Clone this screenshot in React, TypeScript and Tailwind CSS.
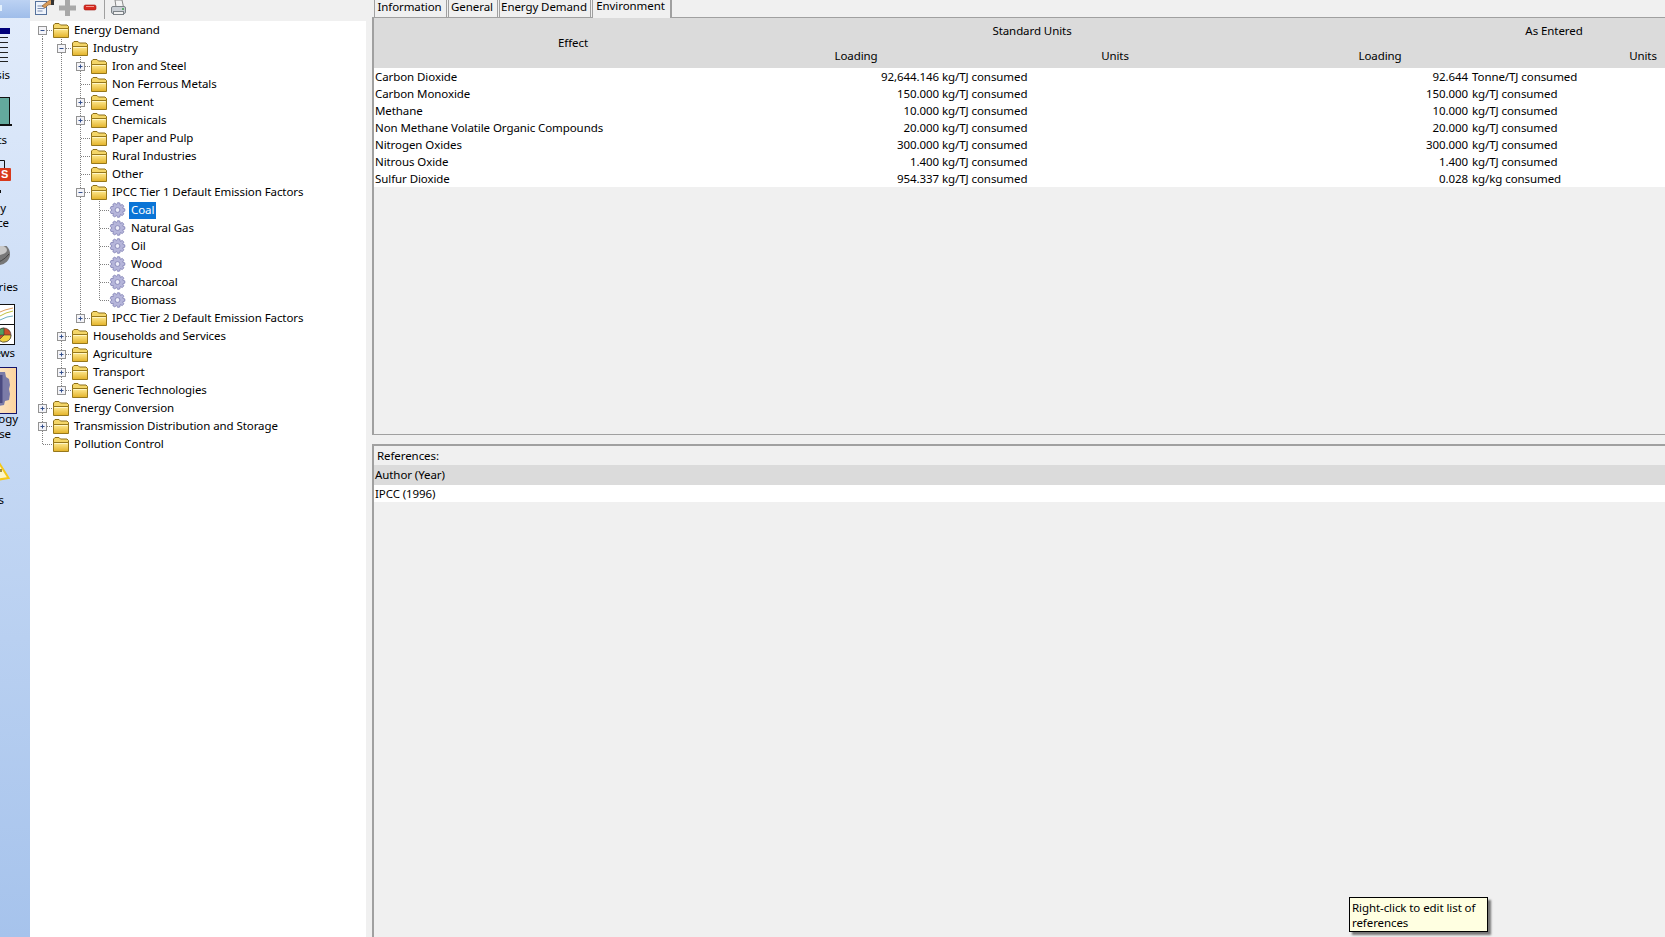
import React from "react";

const FONT = "font-['Noto_Sans','Liberation_Sans',sans-serif]";

type Node = { label: string; kids?: Node[]; open?: boolean; leaf?: boolean; selected?: boolean };

const tree: Node[] = [
  {
    label: "Energy Demand",
    open: true,
    kids: [
      {
        label: "Industry",
        open: true,
        kids: [
          { label: "Iron and Steel", kids: [] },
          { label: "Non Ferrous Metals" },
          { label: "Cement", kids: [] },
          { label: "Chemicals", kids: [] },
          { label: "Paper and Pulp" },
          { label: "Rural Industries" },
          { label: "Other" },
          {
            label: "IPCC Tier 1 Default Emission Factors",
            open: true,
            kids: [
              { label: "Coal", leaf: true, selected: true },
              { label: "Natural Gas", leaf: true },
              { label: "Oil", leaf: true },
              { label: "Wood", leaf: true },
              { label: "Charcoal", leaf: true },
              { label: "Biomass", leaf: true },
            ],
          },
          { label: "IPCC Tier 2 Default Emission Factors", kids: [] },
        ],
      },
      { label: "Households and Services", kids: [] },
      { label: "Agriculture", kids: [] },
      { label: "Transport", kids: [] },
      { label: "Generic Technologies", kids: [] },
    ],
  },
  { label: "Energy Conversion", kids: [] },
  { label: "Transmission Distribution and Storage", kids: [] },
  { label: "Pollution Control" },
];

function Folder() {
  return (
    <svg width="19" height="18" viewBox="0 0 19 18" className="shrink-0">
      <defs>
        <linearGradient id="fd" x1="0" x2="0" y1="0" y2="1">
          <stop offset="0" stopColor="#ffeb94" />
          <stop offset="1" stopColor="#e3b228" />
        </linearGradient>
      </defs>
      <path d="M1.500 15.500V4L3 2.500h4L8.500 4H15l1.500 1.500v10z" fill="#f4d668" stroke="#8c6e18" />
      <path d="M1.500 16.500V7.500h15v9z" fill="url(#fd)" stroke="#97781c" />
      <path d="M2.500 8.500h13" stroke="#fff6c4" />
    </svg>
  );
}

function gearPath(cx: number, cy: number, ro: number, ri: number, n: number) {
  let d = "";
  for (let i = 0; i < n; i++) {
    const a = (i / n) * Math.PI * 2;
    const s = (Math.PI * 2) / n;
    const pts: [number, number][] = [
      [ri, a - s * 0.5],
      [ro, a - s * 0.22],
      [ro, a + s * 0.22],
    ];
    for (const [r, t] of pts) {
      d += `${d ? "L" : "M"}${(cx + r * Math.cos(t)).toFixed(2)} ${(cy + r * Math.sin(t)).toFixed(2)}`;
    }
  }
  return d + "z";
}

function Gear() {
  return (
    <svg width="19" height="18" viewBox="0 0 19 18" className="shrink-0">
      <path d={gearPath(8.5, 9, 7.4, 5.4, 9)} fill="#b5b5da" stroke="#8080b4" strokeWidth="0.8" />
      <circle cx="8.500" cy="9" r="2.400" fill="#ececf8" stroke="#7c7cb0" strokeWidth="0.8" />
    </svg>
  );
}

function Guide({ through }: { through: boolean }) {
  return (
    <svg width="19" height="18" className="shrink-0">
      {through && <path d="M9.500 0V18" stroke="#808080" strokeDasharray="1 1" />}
    </svg>
  );
}

function Branch({ node, first, last, top }: { node: Node; first: boolean; last: boolean; top: boolean }) {
  const hasBox = !!node.kids;
  return (
    <svg width="19" height="18" className="shrink-0">
      <path d={`M9.500 ${top && first ? 9 : 0}V${last ? 9 : 18}`} stroke="#808080" strokeDasharray="1 1" />
      <path d="M10 9.500H19" stroke="#808080" strokeDasharray="1 1" />
      {hasBox && (
        <g>
          <rect x="5.500" y="5.500" width="8" height="8" fill="#f4f4f8" stroke="#939393" />
          <path d="M7.500 9.500h4" stroke="#34508c" />
          {!node.open && <path d="M9.500 7.500v4" stroke="#34508c" />}
        </g>
      )}
    </svg>
  );
}

function Tree({ nodes, guides }: { nodes: Node[]; guides: boolean[] }) {
  return (
    <>
      {nodes.map((n, i) => {
        const last = i === nodes.length - 1;
        return (
          <React.Fragment key={n.label}>
            <div className="flex h-[18px] items-center">
              {guides.map((g, k) => (
                <Guide key={k} through={g} />
              ))}
              <Branch node={n} first={i === 0} last={last} top={guides.length === 0} />
              {n.leaf ? <Gear /> : <Folder />}
              <span
                className={
                  n.selected
                    ? "ml-[1px] flex h-[17px] items-center bg-[#0a74d6] px-[2px] pb-[1px] whitespace-nowrap text-white"
                    : "ml-[1px] flex h-[17px] items-center px-[2px] pb-[2px] whitespace-nowrap text-black"
                }
              >
                {n.label}
              </span>
            </div>
            {n.open && n.kids && <Tree nodes={n.kids} guides={[...guides, !last]} />}
          </React.Fragment>
        );
      })}
    </>
  );
}

function Toolbar() {
  return (
    <div className="flex h-[21px] items-start bg-[#f0f0f0] pl-[3px]">
      <svg width="24" height="17" viewBox="0 0 24 17" className="shrink-0">
        <rect x="2.500" y="1.500" width="11" height="13" fill="#eef3fb" stroke="#56729c" />
        <path d="M4.500 6h7M4.500 8.500h7M4.500 11h5" stroke="#7b8db0" />
        <path d="M9 6l5-4 3 -2h4l-1 4-5 1-3 3z" fill="#d89a58" stroke="#7a5028" strokeWidth="0.6" />
        <rect x="18" y="0" width="3" height="5" fill="#333" />
      </svg>
      <svg width="22" height="17" viewBox="0 0 22 17" className="shrink-0">
        <path d="M8 0h5v5.500h6v5h-6V16H8v-5.500H2v-5h6z" fill="#a8a8a8" />
      </svg>
      <svg width="23" height="17" viewBox="0 0 23 17" className="shrink-0">
        <rect x="5" y="5" width="12" height="5" rx="1.500" fill="#d92a20" stroke="#9a1710" strokeWidth="0.6" />
        <path d="M7 6.500h8" stroke="#f59a90" />
      </svg>
      <div className="mr-[5px] ml-[2px] h-[19px] w-[1px] bg-[#a0a0a0]" />
      <svg width="18" height="17" viewBox="0 0 18 17" className="shrink-0">
        <path d="M5 0h7l1.500 7H6z" fill="#f4f4f4" stroke="#8a8a8a" />
        <rect x="1.500" y="6.500" width="14" height="7" rx="1.500" fill="#c9ced4" stroke="#7c8287" />
        <rect x="3.500" y="11.500" width="10" height="3" fill="#f0f0f0" stroke="#7c8287" />
        <circle cx="13" cy="9" r="1" fill="#3aa04a" />
      </svg>
    </div>
  );
}

function SideLabel({ text, className }: { text: string; className: string }) {
  return (
    <div className={`flex h-[15px] items-center justify-end whitespace-nowrap text-black ${className}`}>
      <span className="shrink-0">{text}</span>
    </div>
  );
}

function Sidebar() {
  return (
    <div className="flex h-full w-[30px] shrink-0 flex-col overflow-hidden bg-gradient-to-b from-[#e2ecfb] to-[#a6c3ec]">
      <div className="h-[18px] shrink-0 bg-gradient-to-b from-[#bcd2f3] to-[#9fbdea]">
        <div className="mt-[5px] ml-0 h-[6px] w-[2px] bg-[#e4f1fd]" />
      </div>
      {/* Analysis */}
      <svg width="30" height="35" viewBox="0 0 30 35" className="mt-[10px] shrink-0">
        <rect x="0" y="0" width="10" height="6" fill="#00007a" />
        <path d="M0 9.500h8M0 14.500h8M0 19.500h8M0 24.500h8M0 29.500h8M0 33.500h8" stroke="#222" />
      </svg>
      <SideLabel text="Analysis" className="mt-[4px] w-[10px]" />
      {/* Results */}
      <svg width="30" height="30" viewBox="0 0 30 30" className="mt-[15px] shrink-0">
        <rect x="-2" y="0.500" width="11.500" height="27" fill="#63a99d" stroke="#111" />
        <path d="M0 28h12" stroke="#111" strokeWidth="2" />
      </svg>
      <SideLabel text="Results" className="mt-[5px] w-[7px]" />
      {/* Energy Balance */}
      <svg width="30" height="36" viewBox="0 0 30 36" className="mt-[13px] shrink-0">
        <path d="M0 .5h4.500V8" fill="none" stroke="#111" />
        <rect x="-1" y="8" width="12" height="13" rx="1" fill="#d8391c" />
        <text x="1" y="18" fontSize="11" fontWeight="700" fill="#fff" fontFamily="Liberation Sans">S</text>
        <path d="M0 31.500h1" stroke="#111" strokeWidth="3" />
      </svg>
      <SideLabel text="Energy" className="mt-[4px] w-[6px]" />
      <SideLabel text="Balance" className="w-[9px]" />
      {/* Summaries */}
      <svg width="30" height="22" viewBox="0 0 30 22" className="mt-[16px] shrink-0">
        <ellipse cx="-1" cy="8" rx="11" ry="11" fill="#777" />
        <ellipse cx="-2" cy="4" rx="9" ry="5" fill="#c8c8c8" />
        <path d="M-8 17q10 0 17-9" stroke="#444" fill="none" />
      </svg>
      <SideLabel text="Summaries" className="mt-[11px] w-[18px]" />
      {/* Overviews */}
      <svg width="30" height="42" viewBox="0 0 30 42" className="mt-[10px] shrink-0">
        <rect x="-2" y="0.500" width="16.500" height="20" fill="#fff" stroke="#111" />
        <rect x="-2" y="20.500" width="16.500" height="20" fill="#fff" stroke="#111" />
        <path d="M0 8l5-2 8-2" stroke="#e0a060" fill="none" />
        <path d="M0 12l6-3 7-2" stroke="#c0c040" fill="none" />
        <path d="M0 16l7-3 6-1" stroke="#70b0c0" fill="none" />
        <circle cx="4" cy="31" r="7" fill="#c8502a" stroke="#333" strokeWidth="0.6" />
        <path d="M4 31H11A7 7 0 0 1 -1 36z" fill="#f0d040" stroke="#333" strokeWidth="0.6" />
        <path d="M4 31V24A7 7 0 0 0 -3 31z" fill="#50a060" stroke="#333" strokeWidth="0.6" />
      </svg>
      <SideLabel text="Overviews" className="mt-[-1px] w-[15px]" />
      {/* Technology */}
      <svg width="30" height="47" viewBox="0 0 30 47" className="mt-[7px] shrink-0">
        <defs>
          <linearGradient id="pe" x1="0" x2="1" y1="0" y2="0">
            <stop offset="0" stopColor="#fbe4c4" />
            <stop offset="1" stopColor="#fdd49c" />
          </linearGradient>
        </defs>
        <rect x="-2" y="0.500" width="18.500" height="46" fill="url(#pe)" stroke="#14146a" />
        <path d="M-2 5h7l1 5 3 2 1 6-1 4 1 5-1 6-4 1-1 4-6 1z" fill="#7b7ba8" />
        <path d="M1 8v28" stroke="#4a4a80" strokeWidth="3" />
      </svg>
      <SideLabel text="Technology" className="mt-[-3px] w-[18px]" />
      <SideLabel text="Database" className="w-[11px]" />
      {/* Notes */}
      <svg width="30" height="28" viewBox="0 0 30 28" className="mt-[15px] shrink-0">
        <path d="M-4 2L8.500 22-16 26z" fill="#fdf6c8" stroke="#f5c818" strokeWidth="2" />
        <rect x="0" y="13" width="2" height="3" fill="#a09040" />
      </svg>
      <SideLabel text="Notes" className="mt-[8px] w-[4px]" />
    </div>
  );
}

const rows = [
  ["Carbon Dioxide", "92,644.146", "kg/TJ consumed", "92.644", "Tonne/TJ consumed"],
  ["Carbon Monoxide", "150.000", "kg/TJ consumed", "150.000", "kg/TJ consumed"],
  ["Methane", "10.000", "kg/TJ consumed", "10.000", "kg/TJ consumed"],
  ["Non Methane Volatile Organic Compounds", "20.000", "kg/TJ consumed", "20.000", "kg/TJ consumed"],
  ["Nitrogen Oxides", "300.000", "kg/TJ consumed", "300.000", "kg/TJ consumed"],
  ["Nitrous Oxide", "1.400", "kg/TJ consumed", "1.400", "kg/TJ consumed"],
  ["Sulfur Dioxide", "954.337", "kg/TJ consumed", "0.028", "kg/kg consumed"],
];

const cols = "grid-cols-[399px_166px_352px_180px_346px]";

function EmissionTable() {
  return (
    <div className="w-[1443px]">
      <div className={`grid ${cols} grid-rows-[26px_24px] bg-[#dbdbdb] text-center text-black`}>
        <div className="row-span-2 flex items-center justify-center pb-[2px] pr-[1px]">Effect</div>
        <div className="col-span-2 flex items-center justify-center pb-[1px]">Standard Units</div>
        <div className="col-span-2 flex items-center justify-center pb-[1px]">As Entered</div>
        <div className="flex items-center justify-center pb-[2px]">Loading</div>
        <div className="flex items-center justify-center pb-[2px]">Units</div>
        <div className="flex items-center justify-center pb-[2px] pr-[2px]">Loading</div>
        <div className="flex items-center justify-center pb-[2px] pr-[2px]">Units</div>
      </div>
      <div className="bg-white">
        {rows.map((r) => (
          <div key={r[0]} className={`grid ${cols} h-[17px] items-center pb-[1px] text-black`}>
            <div className="pl-[1px] whitespace-nowrap">{r[0]}</div>
            <div className="text-right">{r[1]}</div>
            <div className="pl-[3px] whitespace-nowrap">{r[2]}</div>
            <div className="pr-[3px] text-right">{r[3]}</div>
            <div className="pl-[1px] whitespace-nowrap">{r[4]}</div>
          </div>
        ))}
      </div>
    </div>
  );
}

const tabs = [
  { t: "Information", w: "w-[73px]" },
  { t: "General", w: "w-[50px]" },
  { t: "Energy Demand", w: "w-[92px]" },
];

function TabStrip() {
  return (
    <div className="flex h-[17px] pl-[2px]">
      {tabs.map((x) => (
        <div
          key={x.t}
          className={`flex h-[17px] ${x.w} mr-[1px] items-center justify-center border-x border-[#a0a0a0] pr-[2px] pb-[4px] whitespace-nowrap text-black`}
        >
          {x.t}
        </div>
      ))}
      <div className="relative z-10 flex h-[18px] w-[80px] items-center justify-center border-r-2 border-l border-[#a0a0a0] bg-[#f0f0f0] pr-[2px] pb-[7px] whitespace-nowrap text-black">
        Environment
      </div>
    </div>
  );
}

export default function App() {
  return (
    <div className={`flex h-[937px] w-[1665px] overflow-hidden bg-[#f0f0f0] text-[11.5px] leading-[15px] tracking-[-0.08px] ${FONT}`}>
      <Sidebar />
      <div className="flex w-[336px] shrink-0 flex-col">
        <Toolbar />
        <div className="flex-1 bg-white pt-0 pl-[3px]">
          <Tree nodes={tree} guides={[]} />
        </div>
      </div>
      <div className="relative flex min-w-0 flex-1 flex-col pl-[6px]">
        <TabStrip />
        <div className="h-[418px] overflow-hidden border-y border-r-0 border-l-2 border-[#a0a0a0]">
          <EmissionTable />
        </div>
        <div className="mt-[9px] flex-1 overflow-hidden border-t-2 border-l-2 border-[#a0a0a0]">
          <div className="flex h-[19px] items-center pb-[1px] pl-[3px] text-black">References:</div>
          <div className="flex h-[20px] items-center bg-[#dbdbdb] pb-[1px] pl-[1px] text-black">Author (Year)</div>
          <div className="flex h-[17px] items-center bg-white pl-[1px] text-black">IPCC (1996)</div>
        </div>
        <div className="absolute right-[177px] bottom-[5px] h-[35px] w-[139px] border border-black bg-[#ffffe1] pt-[2px] pl-[2px] text-black shadow-[3px_3px_2px_#777]">
          Right-click to edit list of references
        </div>
      </div>
    </div>
  );
}
